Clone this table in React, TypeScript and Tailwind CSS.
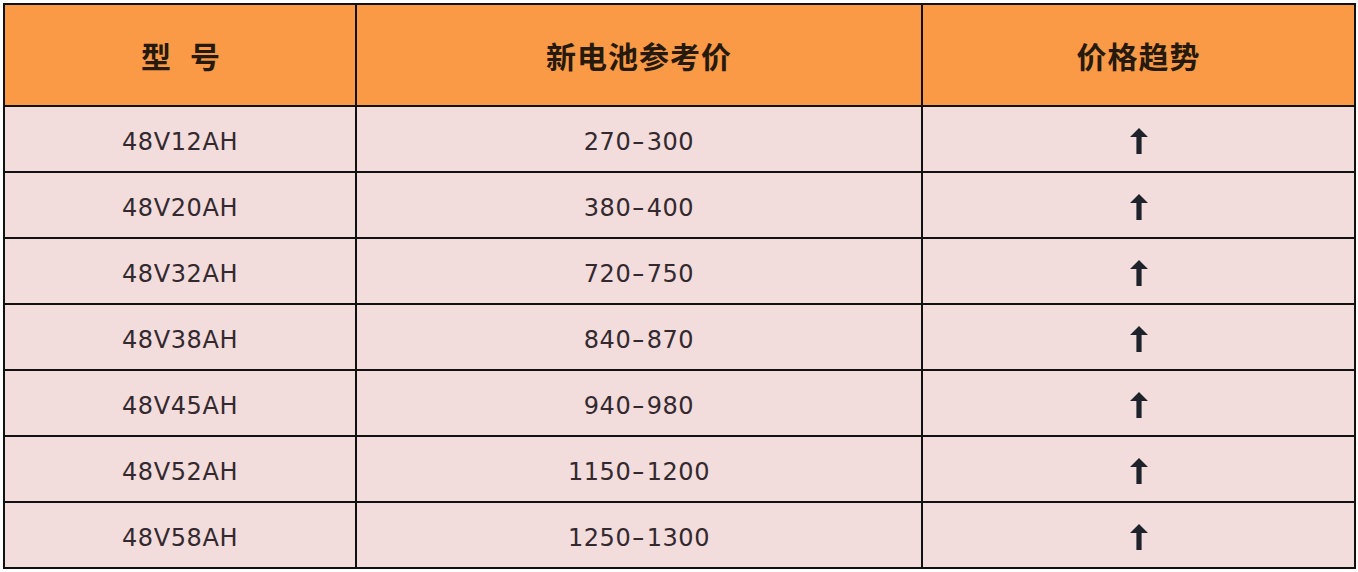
const rows = [
  ["48V12AH", "270", "300"],
  ["48V20AH", "380", "400"],
  ["48V32AH", "720", "750"],
  ["48V38AH", "840", "870"],
  ["48V45AH", "940", "980"],
  ["48V52AH", "1150", "1200"],
  ["48V58AH", "1250", "1300"],
];

function UpArrow() {
  return (
    <svg width="20" height="26" viewBox="0 0 20 26" className="mt-[4px]">
      <path d="M10 0 L19 9 L12.6 9 L12.6 26 L7.4 26 L7.4 9 L1 9 Z" fill="#1e232b" />
    </svg>
  );
}

const head = "bg-[#fa9946] flex items-center justify-center text-[30px] font-bold text-[#26190e] tracking-[1px]";
const cell = "bg-[#f2dcdc] flex items-center justify-center text-[24px] text-[#33292f] tracking-[0.6px] pt-[6px]";

export default function App() {
  return (
    <div className="w-[1358px] h-[572px] bg-white pt-[3px] pl-[3px] font-['DejaVu_Sans','Noto_Sans_CJK_SC',sans-serif]">
      <div className="w-[1353px] grid grid-cols-[350px_564px_431px] grid-rows-[100px_repeat(7,64px)] gap-[2px] p-[2px] bg-[#111]">
        <div className={head}>
          <span className="font-['Noto_Sans_CJK_SC',sans-serif] pl-[2px]">型<span className="pl-[18px]">号</span></span>
        </div>
        <div className={head}>
          <span className="font-['Noto_Sans_CJK_SC',sans-serif]">新电池参考价</span>
        </div>
        <div className={head}>
          <span className="font-['Noto_Sans_CJK_SC',sans-serif]">价格趋势</span>
        </div>
        {rows.map(([model, lo, hi]) => (
          <>
            <div key={model + "m"} className={cell}>{model}</div>
            <div key={model + "p"} className={cell}>
              {lo}
              <span className="inline-block scale-x-[1.5] px-[3px]">-</span>
              {hi}
            </div>
            <div key={model + "a"} className={cell + " !pt-0"}>
              <UpArrow />
            </div>
          </>
        ))}
      </div>
    </div>
  );
}
